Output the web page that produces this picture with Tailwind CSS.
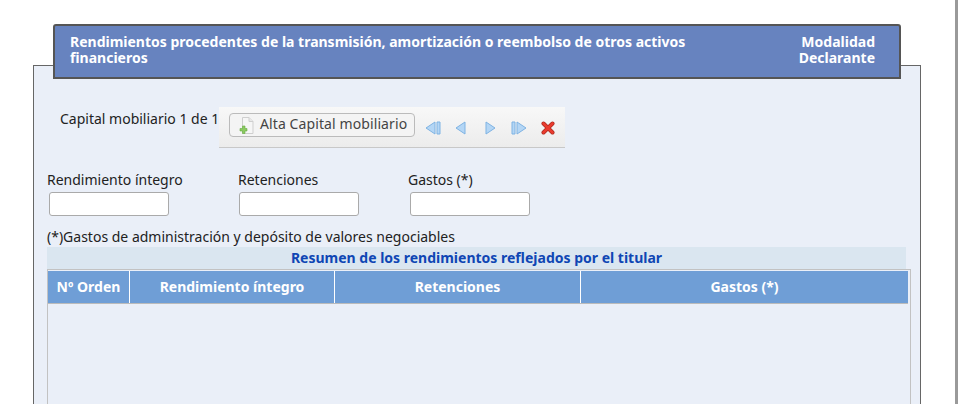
<!DOCTYPE html>
<html lang="es">
<head>
  <meta charset="UTF-8" />
  <title>Capital mobiliario</title>
  <script src="https://cdn.jsdelivr.net/npm/@tailwindcss/browser@4"></script>
</head>
<body class="bg-white text-[#222] font-['Noto_Sans',sans-serif] text-[14px] overflow-hidden">
  <div class="h-[404px] w-[958px] overflow-hidden pt-[24px] border-r-[3px] border-[#9a9a9a]">
    <main class="w-[888px] ml-[33px]">
      <!-- cabecera -->
      <header class="relative z-10 -mb-[14px] ml-[20px] w-[848px] h-[55px] bg-[#6783bf] border-2 border-[#555] rounded-t-[3px] flex justify-between pl-[15px] pr-[24px] pt-[8px] text-white font-bold text-[14px] leading-[16px]">
        <div class="w-[640px]">Rendimientos procedentes de la transmisión, amortización o reembolso de otros activos financieros</div>
        <div class="text-right">Modalidad<br />Declarante</div>
      </header>

      <section class="h-[400px] bg-[#eaeff8] border border-[#666] pl-[13px] pr-[9px]">
        <!-- barra -->
        <div class="flex items-start pt-[41px] h-[83px]">
          <span class="ml-[13px] mt-px w-[159px] whitespace-nowrap">Capital mobiliario 1 de 1</span>
          <div class="w-[346px] h-[41px] bg-gradient-to-b from-[#f8f8f8] to-[#ececec] border-b border-[#c8c8c8] flex items-start pl-[10px] pt-[6px]">
            <button class="h-[24px] w-[186px] border border-[#bbb] rounded-[4px] bg-[#f4f4f4] flex items-center pl-[9px] pb-[4px] gap-[6px] text-[#444] tracking-[0.1px] whitespace-nowrap">
              <svg width="15" height="18" viewBox="0 0 15 18" class="mt-[6px]">
                <path d="M3.500 .5h6.500l4 4v12h-10.500z" fill="#f6f6f6" stroke="#cfcfcf" />
                <path d="M10 .5v4h4" fill="#e8e8e8" stroke="#cfcfcf" />
                <path d="M3.500 9h2.500v2.500h2v2.500h-2v2.500h-2.500v-2.500h-2.500v-2.500h2.500z" fill="#8ccb62" stroke="#69ad45" stroke-width=".6" />
              </svg>
              Alta Capital mobiliario
            </button>
            <div class="flex items-center h-[26px] mt-[2px] ml-[10px]">
              <svg width="16" height="14" viewBox="0 0 16 14" class="mr-[14px]"><path d="M10 1v12L1 7z" fill="#b4d6f5" stroke="#7fb3e3" /><path d="M12 1h3v12h-3z" fill="#b4d6f5" stroke="#7fb3e3" /></svg>
              <svg width="11" height="14" viewBox="0 0 11 14" class="mr-[19px]"><path d="M10 1v12L1 7z" fill="#b4d6f5" stroke="#7fb3e3" /></svg>
              <svg width="11" height="14" viewBox="0 0 11 14" class="mr-[15px]"><path d="M1 1v12l9-6z" fill="#b4d6f5" stroke="#7fb3e3" /></svg>
              <svg width="16" height="14" viewBox="0 0 16 14" class="mr-[14px]"><path d="M1 1h3v12H1z" fill="#b4d6f5" stroke="#7fb3e3" /><path d="M6 1v12l9-6z" fill="#b4d6f5" stroke="#7fb3e3" /></svg>
              <svg width="14" height="14" viewBox="0 0 14 14"><path d="M2.500 2.500l9 9M11.500 2.500l-9 9" stroke="#a8281c" stroke-width="4" stroke-linecap="round" /><path d="M2.500 2.500l9 9M11.500 2.500l-9 9" stroke="#ea3b2e" stroke-width="2.600" stroke-linecap="round" /></svg>
            </div>
          </div>
        </div>

        <!-- campos -->
        <div class="flex mt-[21px] h-[48px]">
          <label class="w-[191px] block whitespace-nowrap leading-[20px]">Rendimiento íntegro
            <input class="block mt-[2px] ml-[2px] w-[120px] h-[24px] bg-white border border-[#aaa] rounded-[3px]" />
          </label>
          <label class="w-[170px] block whitespace-nowrap leading-[20px]">Retenciones
            <input class="block mt-[2px] ml-px w-[120px] h-[24px] bg-white border border-[#aaa] rounded-[3px]" />
          </label>
          <label class="block whitespace-nowrap leading-[20px]">Gastos (*)
            <input class="block mt-[2px] ml-[2px] w-[120px] h-[24px] bg-white border border-[#aaa] rounded-[3px]" />
          </label>
        </div>

        <p class="mt-[9px] leading-[20px] whitespace-nowrap">(*)Gastos de administración y depósito de valores negociables</p>

        <!-- resumen -->
        <div class="w-[859px] h-[22px] bg-[#dae6f0] text-center text-[#0f46b4] font-bold leading-[22px]">Resumen de los rendimientos reflejados por el titular</div>
        <div class="w-[864px] h-[200px] border border-[#c2c2c2]">
          <div class="flex h-[33px] mt-px w-[860px] bg-[#6f9ed6] border-b border-[#bbb] text-white font-bold text-center leading-[32px]">
            <div class="w-[82px] border-r border-white">Nº Orden</div>
            <div class="w-[205px] border-r border-white">Rendimiento íntegro</div>
            <div class="w-[246px] border-r border-white">Retenciones</div>
            <div class="flex-1">Gastos (*)</div>
          </div>
        </div>
      </section>
    </main>
  </div>
</body>
</html>
